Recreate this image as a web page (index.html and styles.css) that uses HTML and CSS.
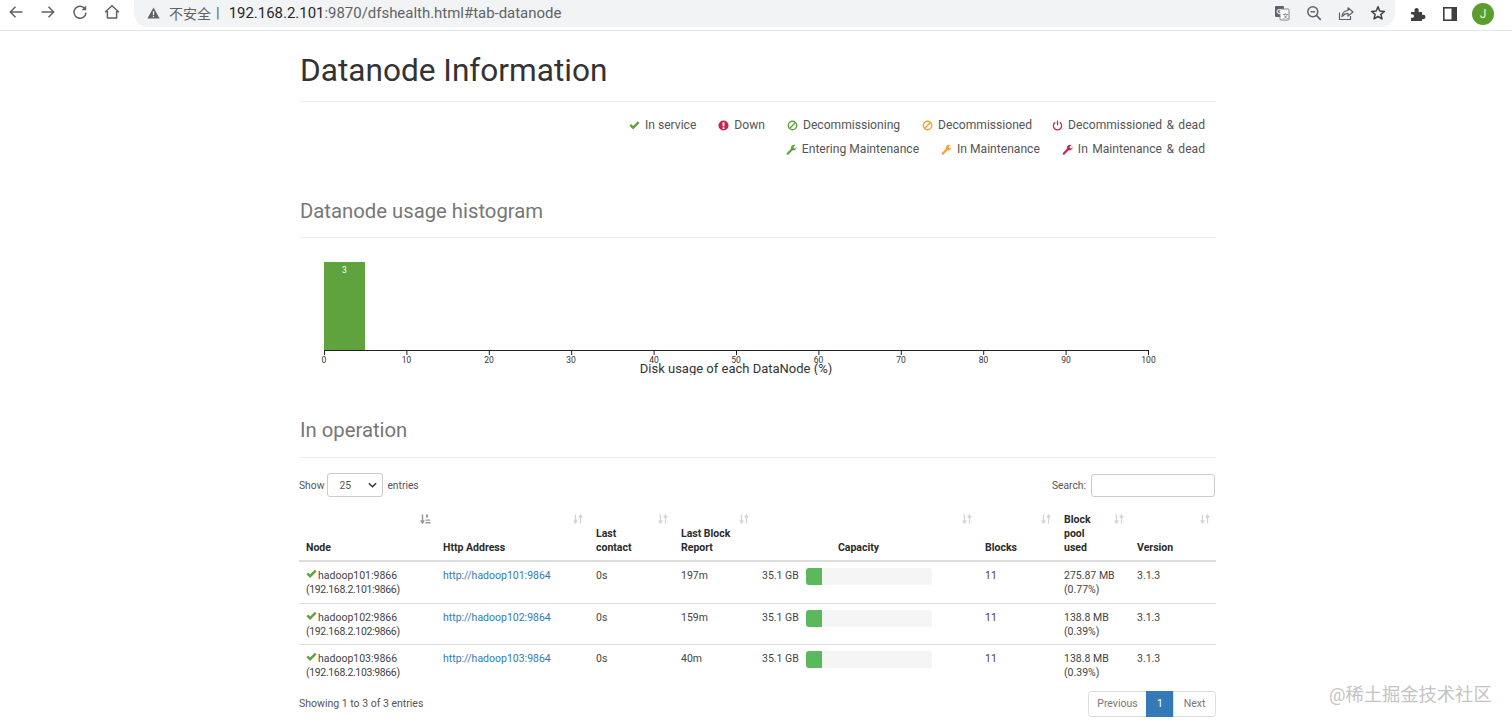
FILE: index.html
```html
<!DOCTYPE html>
<html lang="en">
<head>
<meta charset="utf-8">
<title>Datanode Information</title>
<link rel="stylesheet" href="styles.css">
</head>
<body>
<svg class="defs" width="0" height="0" aria-hidden="true">
  <symbol id="i-check" viewBox="0 0 14 12"><path d="M.6 6.4 L2.8 4.2 L5.2 6.6 L11.2 .6 L13.4 2.8 L5.2 11 Z" fill="currentColor"/></symbol>
  <symbol id="i-excl" viewBox="0 0 12 12"><circle cx="6" cy="6" r="5.5" fill="currentColor"/><rect x="5" y="2.4" width="2" height="4.6" fill="#fff"/><rect x="5" y="8" width="2" height="1.8" fill="#fff"/></symbol>
  <symbol id="i-ban" viewBox="0 0 12 12"><circle cx="6" cy="6" r="4.6" fill="none" stroke="currentColor" stroke-width="1.5"/><path d="M2.8 9.2 L9.2 2.8" stroke="currentColor" stroke-width="1.5"/></symbol>
  <symbol id="i-off" viewBox="0 0 12 12"><path d="M3.5 2.6 A4.5 4.5 0 1 0 8.5 2.6" fill="none" stroke="currentColor" stroke-width="1.4"/><rect x="5.3" y=".6" width="1.4" height="5.2" fill="currentColor"/></symbol>
  <symbol id="i-wrench" viewBox="0 0 12 12"><path d="M.8 10.2 L5.4 5.2 C4.9 3 6.4 .8 9 .8 L10.4 1 L8.2 3.1 L8.7 4.6 L10.2 5 L11.6 3 C11.8 5.6 9.6 7.4 7.2 6.9 L2.4 11.6 Q1.6 12 1 11.4 Q.4 10.8 .8 10.2 Z" fill="currentColor"/></symbol>
  <symbol id="i-sort" viewBox="0 0 11 10"><path d="M2.5 .5 V8 M.8 6.4 L2.5 9 L4.2 6.4 M7.5 9.5 V2 M5.8 3.6 L7.5 1 L9.2 3.6" fill="none" stroke="currentColor" stroke-width="1.3"/></symbol>
  <symbol id="i-sorted" viewBox="0 0 11 10"><path d="M2.5 .5 V8 M.8 6.4 L2.5 9 L4.2 6.4" fill="none" stroke="currentColor" stroke-width="1.5"/><path d="M6 .5 H8 V3.5 H6 Z M5.5 5.5 H10 V6.8 H5.5 Z M5.5 8 H10.5 V9.5 H5.5 Z" fill="currentColor"/></symbol>
</svg>

<header class="toolbar">
  <nav class="nav-btns">
    <svg class="tb-icon" viewBox="0 0 16 16"><path d="M14.5 8 H2.5 M7.5 2.8 L2.3 8 L7.5 13.2" fill="none" stroke="#5f6368" stroke-width="1.5"/></svg>
    <svg class="tb-icon" viewBox="0 0 16 16"><path d="M1.5 8 H13.5 M8.5 2.8 L13.7 8 L8.5 13.2" fill="none" stroke="#5f6368" stroke-width="1.5"/></svg>
    <svg class="tb-icon" viewBox="0 0 16 16"><path d="M13.2 5.2 A6 6 0 1 0 14 8.6" fill="none" stroke="#5f6368" stroke-width="1.5"/><path d="M14.2 1.4 V6.2 H9.4 Z" fill="#5f6368"/></svg>
    <svg class="tb-icon" viewBox="0 0 16 16"><path d="M8 1.8 L14.5 7.8 H12.6 V14 H3.4 V7.8 H1.5 Z" fill="none" stroke="#5f6368" stroke-width="1.5" stroke-linejoin="round"/></svg>
  </nav>
  <div class="omnibox">
    <div class="url">
      <svg class="warn" viewBox="0 0 14 13"><path d="M7 .5 L13.6 12.5 H.4 Z" fill="#5f6368"/><rect x="6.3" y="4.5" width="1.4" height="4.2" fill="#f1f3f4"/><rect x="6.3" y="9.6" width="1.4" height="1.5" fill="#f1f3f4"/></svg>
      <span class="insecure">不安全</span><span class="sep">|</span>
      <span class="host">192.168.2.101</span><span class="path">:9870/dfshealth.html#tab-datanode</span>
    </div>
    <div class="omni-actions">
      <svg class="tb-icon" viewBox="0 0 16 16"><rect x="1" y="1" width="9" height="11" rx="1" fill="#5f6368"/><rect x="6" y="4" width="9" height="11" rx="1" fill="#fff" stroke="#80868b"/><text x="2.6" y="9" class="tr-g">G</text><text x="8.4" y="12.5" class="tr-a">文</text></svg>
      <svg class="tb-icon" viewBox="0 0 16 16"><circle cx="6.8" cy="6.8" r="5" fill="none" stroke="#5f6368" stroke-width="1.5"/><path d="M10.5 10.5 L14.8 14.8" stroke="#5f6368" stroke-width="1.7"/><path d="M4.4 6.8 H9.2" stroke="#5f6368" stroke-width="1.4"/></svg>
      <svg class="tb-icon" viewBox="0 0 16 16"><path d="M1.5 7.5 V14.5 H12.5 V11" fill="none" stroke="#5f6368" stroke-width="1.2"/><path d="M4 11.5 C4.5 7.5 7 5.6 10 5.5 V2.8 L15 7 L10 11 V8.4 C7.8 8.4 5.8 9.4 4 11.5 Z" fill="none" stroke="#5f6368" stroke-width="1.2" stroke-linejoin="round"/></svg>
      <svg class="tb-icon" viewBox="0 0 16 16"><path d="M8 1.8 L9.8 6 L14.4 6.4 L10.9 9.4 L12 13.9 L8 11.5 L4 13.9 L5.1 9.4 L1.6 6.4 L6.2 6 Z" fill="none" stroke="#3c4043" stroke-width="1.5" stroke-linejoin="round"/></svg>
    </div>
  </div>
  <div class="ext-btns">
    <svg class="tb-icon" viewBox="0 0 16 16"><path d="M1 6 H4.6 C4 3.6 5 2 6.6 2 C8.2 2 9.2 3.6 8.6 6 H12 V9 C14.2 8.4 15.4 9.4 15.4 11 C15.4 12.6 14.2 13.6 12 13 V15 H1 V11.6 C3 12.2 4 11.2 4 10 C4 8.8 3 7.8 1 8.4 Z" fill="#3c4043"/></svg>
    <svg class="tb-icon" viewBox="0 0 16 16"><rect x="1.8" y="1.8" width="12.4" height="12.4" fill="none" stroke="#3c4043" stroke-width="1.6"/><rect x="9.5" y="2" width="4.5" height="12" fill="#3c4043"/></svg>
    <span class="avatar">J</span>
  </div>
</header>

<main class="page">
  <h1 class="page-title">Datanode Information</h1>

  <ul class="legend">
    <li class="legend-row">
      <span class="lg"><svg class="lg-icon green"><use href="#i-check"/></svg>In service</span>
      <span class="lg"><svg class="lg-icon red"><use href="#i-excl"/></svg>Down</span>
      <span class="lg"><svg class="lg-icon green"><use href="#i-ban"/></svg>Decommissioning</span>
      <span class="lg"><svg class="lg-icon orange"><use href="#i-ban"/></svg>Decommissioned</span>
      <span class="lg wide tight"><svg class="lg-icon red"><use href="#i-off"/></svg>Decommissioned &amp; dead</span>
    </li>
    <li class="legend-row">
      <span class="lg"><svg class="lg-icon green"><use href="#i-wrench"/></svg>Entering Maintenance</span>
      <span class="lg"><svg class="lg-icon orange"><use href="#i-wrench"/></svg>In Maintenance</span>
      <span class="lg wide"><svg class="lg-icon red"><use href="#i-wrench"/></svg>In Maintenance &amp; dead</span>
    </li>
  </ul>

  <h3 class="section-title hist-title">Datanode usage histogram</h3>
  <svg class="histogram" width="917" height="137" viewBox="0 0 917 137">
    <rect x="25" y="24" width="41" height="88" fill="#5fa33e"/>
    <text x="45.500" y="35" class="bar-label">3</text>
    <path d="M25 112.500 H849" stroke="#222" stroke-width="1"/>
    <path d="M25.500 112 V117 M107.900 112 V117 M190.300 112 V117 M272.700 112 V117 M355.100 112 V117 M437.500 112 V117 M519.900 112 V117 M602.300 112 V117 M684.700 112 V117 M767.100 112 V117 M849.500 112 V117" stroke="#222" stroke-width="1"/>
    <g class="ticks">
      <text x="25" y="125">0</text><text x="107.500" y="125">10</text><text x="190" y="125">20</text><text x="272" y="125">30</text><text x="355" y="125">40</text><text x="437" y="125">50</text><text x="519.500" y="125">60</text><text x="602" y="125">70</text><text x="684.500" y="125">80</text><text x="767" y="125">90</text><text x="849.500" y="125">100</text>
    </g>
    <text x="437" y="134.500" class="axis-title">Disk usage of each DataNode (%)</text>
  </svg>

  <h3 class="section-title op-title">In operation</h3>

  <div class="dt-controls">
    <label class="dt-length">Show <span class="fake-select"><span>25</span><svg class="chev" viewBox="0 0 10 6"><path d="M1 1 L5 5 L9 1" fill="none" stroke="#333" stroke-width="1.6"/></svg></span> entries</label>
    <label class="dt-search">Search: <span class="fake-input"></span></label>
  </div>

  <table class="nodes">
    <colgroup><col class="c1"><col class="c2"><col class="c3"><col class="c4"><col class="c5"><col class="c6"><col class="c7"><col class="c8"></colgroup>
    <thead>
      <tr>
        <th>Node<svg class="sort dark"><use href="#i-sorted"/></svg></th>
        <th>Http Address<svg class="sort"><use href="#i-sort"/></svg></th>
        <th>Last<br>contact<svg class="sort"><use href="#i-sort"/></svg></th>
        <th>Last Block<br>Report<svg class="sort"><use href="#i-sort"/></svg></th>
        <th class="center">Capacity<svg class="sort"><use href="#i-sort"/></svg></th>
        <th>Blocks<svg class="sort"><use href="#i-sort"/></svg></th>
        <th>Block<br>pool<br>used<svg class="sort"><use href="#i-sort"/></svg></th>
        <th>Version<svg class="sort"><use href="#i-sort"/></svg></th>
      </tr>
    </thead>
    <tbody>
      <tr>
        <td><svg class="ok"><use href="#i-check"/></svg>hadoop101:9866<br><span class="ip">(192.168.2.101:9866)</span></td>
        <td><a href="#n1">http://hadoop101:9864</a></td>
        <td>0s</td><td>197m</td>
        <td><div class="cap"><span class="cap-text">35.1 GB</span><div class="bar"><div class="fill" style="width:13%"></div></div></div></td>
        <td>11</td><td>275.87 MB<br>(0.77%)</td><td>3.1.3</td>
      </tr>
      <tr>
        <td><svg class="ok"><use href="#i-check"/></svg>hadoop102:9866<br><span class="ip">(192.168.2.102:9866)</span></td>
        <td><a href="#n2">http://hadoop102:9864</a></td>
        <td>0s</td><td>159m</td>
        <td><div class="cap"><span class="cap-text">35.1 GB</span><div class="bar"><div class="fill" style="width:13%"></div></div></div></td>
        <td>11</td><td>138.8 MB<br>(0.39%)</td><td>3.1.3</td>
      </tr>
      <tr>
        <td><svg class="ok"><use href="#i-check"/></svg>hadoop103:9866<br><span class="ip">(192.168.2.103:9866)</span></td>
        <td><a href="#n3">http://hadoop103:9864</a></td>
        <td>0s</td><td>40m</td>
        <td><div class="cap"><span class="cap-text">35.1 GB</span><div class="bar"><div class="fill" style="width:13%"></div></div></div></td>
        <td>11</td><td>138.8 MB<br>(0.39%)</td><td>3.1.3</td>
      </tr>
    </tbody>
  </table>

  <div class="dt-footer">
    <span class="dt-info">Showing 1 to 3 of 3 entries</span>
    <div class="pager">
      <span class="pg prev">Previous</span><span class="pg active">1</span><span class="pg next">Next</span>
    </div>
  </div>
</main>
<div class="watermark">@稀土掘金技术社区</div>
</body>
</html>
```
FILE: styles.css
```css
* { box-sizing: border-box; }
html, body { margin: 0; padding: 0; height: 726px; overflow: hidden; background: #fff; }
body { font-family: Roboto, "Noto Sans CJK SC", sans-serif; color: #333; position: relative; }
.defs { position: absolute; }

.toolbar { display: flex; align-items: flex-start; height: 31px; background: #fff; border-bottom: 1px solid #e3e5e8; }
.nav-btns { display: flex; gap: 16px; padding: 4px 0 0 8px; width: 134px; }
.tb-icon { width: 16px; height: 16px; flex: none; }
.omnibox { display: flex; justify-content: space-between; align-items: center; width: 1261px; height: 27px; background: #f1f3f4; border-radius: 0 0 14px 14px; padding: 0 9px 2px 13px; }
.url { display: flex; align-items: center; font-size: 14.950px; white-space: nowrap; }
.warn { width: 13px; height: 12px; margin-right: 9px; }
.insecure { color: #5f6368; font-size: 14px; }
.sep { color: #5f6368; margin: 0 9px 0 5px; }
.host { color: #26282b; }
.path { color: #5f6368; }
.omni-actions { display: flex; gap: 16px; }
.tr-g { font: bold 7px "Liberation Sans", sans-serif; fill: #fff; }
.tr-a { font: 6px "Noto Sans CJK SC", sans-serif; fill: #5f6368; }
.ext-btns { display: flex; align-items: center; gap: 16px; padding: 3px 0 0 15px; }
.avatar { width: 22px; height: 22px; margin-left: -2px; border-radius: 50%; background: #5b9e2d; color: #e8f5d8; font-size: 12px; display: flex; align-items: center; justify-content: center; }

.page { margin-left: 299px; width: 917px; }
.page-title { margin: 0 0 0 1px; height: 71px; padding-top: 16px; font-size: 31.600px; line-height: 48px; font-weight: 400; color: #333; border-bottom: 1px solid #eee; }

.legend { list-style: none; margin: 0; padding: 11px 11px 0 0; }
.legend-row { display: flex; justify-content: flex-end; gap: 22px; height: 24px; font-size: 12.100px; line-height: 24px; color: #555; }
.lg { display: flex; align-items: center; }
.wide { word-spacing: 1.400px; }
.tight { margin-left: -2px; }
.lg-icon { width: 11px; height: 11px; margin-right: 5px; }
.green { color: #5fa33e; }
.red { color: #c7254e; }
.orange { color: #f0a030; }

.section-title { margin: 0 0 0 1px; font-size: 20.300px; font-weight: 400; color: #777; border-bottom: 1px solid #eee; line-height: 26px; }
.hist-title { margin-top: 37px; padding-bottom: 13px; }
.histogram { display: block; margin-left: 0; }
.bar-label { font: 8.500px Roboto, sans-serif; fill: #fff; text-anchor: middle; }
.ticks text { font: 8.500px Roboto, sans-serif; fill: #333; text-anchor: middle; }
.axis-title { font: 13px Roboto, sans-serif; fill: #333; text-anchor: middle; }
.op-title { margin-top: 42px; padding-bottom: 14px; }

.dt-controls { display: flex; justify-content: space-between; align-items: center; height: 26px; margin-top: 14px; font-size: 10.300px; color: #555; }
.dt-length, .dt-search { display: flex; align-items: center; gap: 3px; }
.dt-search { gap: 5px; margin-right: 1px; }
.fake-select { display: flex; align-items: center; justify-content: space-between; width: 56px; height: 24px; border: 1px solid #ccc; border-radius: 3px; padding: 0 5px 0 11px; margin-right: 1px; font-size: 10.300px; }
.chev { width: 9px; height: 6px; }
.fake-input { display: block; width: 124px; height: 23px; border: 1px solid #ccc; border-radius: 3px; }

.nodes { border-collapse: collapse; table-layout: fixed; width: 917px; margin-top: 15px; font-size: 10.500px; line-height: 14px; color: #444; }
.c1 { width: 137px; } .c2 { width: 153px; } .c3 { width: 85px; } .c4 { width: 81px; } .c5 { width: 223px; } .c6 { width: 79px; } .c7 { width: 73px; } .c8 { width: 86px; }
.nodes th { position: relative; text-align: left; vertical-align: bottom; padding: 0 7px 5px; font-weight: 700; color: #2b2b2b; border-bottom: 2px solid #ddd; }
.nodes th.center { text-align: center; padding-right: 23px; }
.sort { position: absolute; right: 5px; top: 1px; width: 11px; height: 10px; color: #d4d4d4; }
.sort.dark { color: #999; }
.nodes td { vertical-align: top; padding: 7px 7px 5.500px; border-top: 1px solid #ddd; }
.nodes tbody tr:first-child td { border-top: 0; }
.ok { width: 11px; height: 10px; color: #5fa33e; margin-right: 1px; }
.ip { letter-spacing: -.35px; }
.nodes a { color: #337ab7; text-decoration: none; }
.cap { display: flex; align-items: flex-start; gap: 7px; }
.cap-text { white-space: nowrap; line-height: 14px; }
.bar { flex: none; width: 126px; height: 17px; margin-top: -1px; background: #f5f5f5; border-radius: 3px; overflow: hidden; margin-bottom: -3px; }
.fill { height: 100%; background: #5cb85c; }

.dt-footer { display: flex; justify-content: space-between; align-items: flex-start; font-size: 10.500px; color: #555; margin-top: 5px; }
.dt-info { padding-top: 6px; }
.pager { display: flex; height: 26px; }
.pg { display: flex; align-items: center; justify-content: center; border: 1px solid #ddd; color: #777; }
.prev { width: 59px; border-radius: 3px 0 0 3px; }
.next { width: 43px; margin-left: -1px; border-radius: 0 3px 3px 0; }
.pg.active { width: 28px; margin-left: -1px; background: #337ab7; border-color: #337ab7; color: #fff; }

.watermark { position: absolute; left: 1329px; top: 682px; font-size: 18.300px; line-height: 26px; color: #c4c4c4; white-space: nowrap; }
```
